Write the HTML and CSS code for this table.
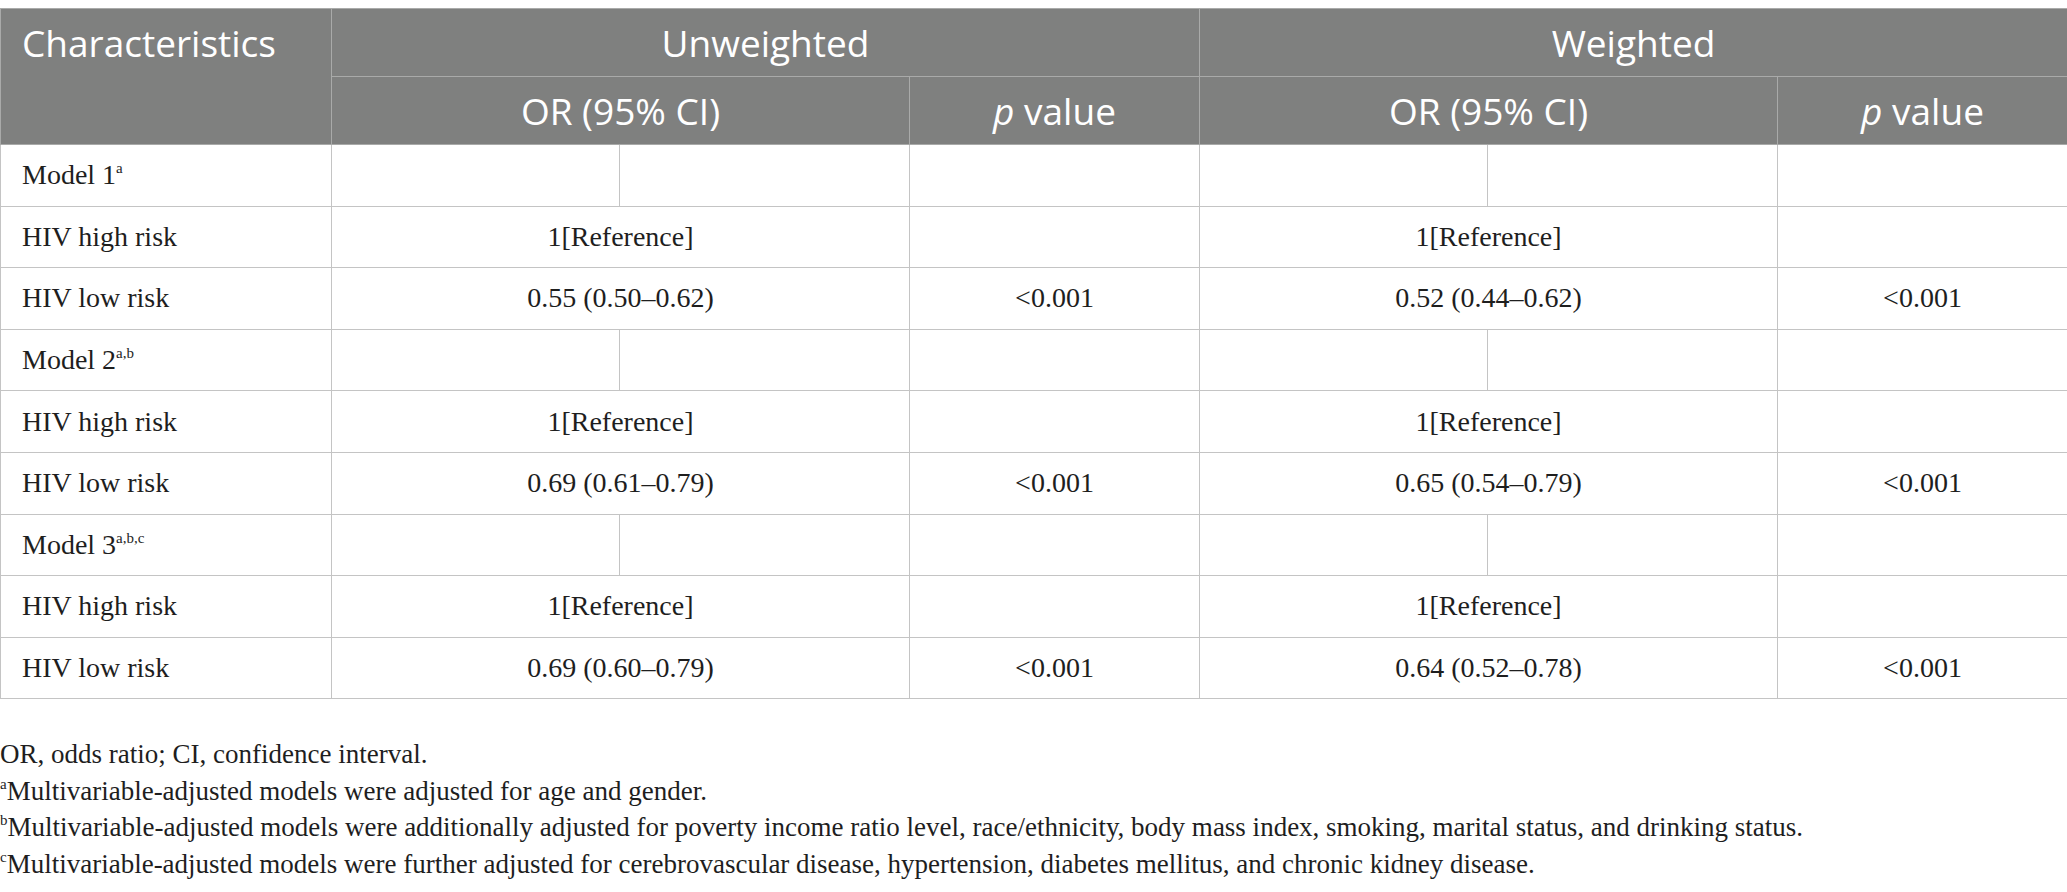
FILE: index.html
```html
<!DOCTYPE html>
<html>
<head>
<meta charset="utf-8">
<link rel="stylesheet" href="styles.css">
</head>
<body>
<table class="results">
  <colgroup>
    <col class="c-char">
    <col class="c-a">
    <col class="c-b">
    <col class="c-p">
    <col class="c-a">
    <col class="c-b">
    <col class="c-p">
  </colgroup>
  <thead>
    <tr class="h1">
      <th class="left" rowspan="2">Characteristics</th>
      <th colspan="3">Unweighted</th>
      <th colspan="3">Weighted</th>
    </tr>
    <tr class="h2">
      <th colspan="2">OR (95% CI)</th>
      <th><i>p</i> value</th>
      <th colspan="2">OR (95% CI)</th>
      <th><i>p</i> value</th>
    </tr>
  </thead>
  <tbody>
    <tr><td class="left">Model 1<sup>a</sup></td><td></td><td></td><td></td><td></td><td></td><td></td></tr>
    <tr><td class="left">HIV high risk</td><td colspan="2">1[Reference]</td><td></td><td colspan="2">1[Reference]</td><td></td></tr>
    <tr><td class="left">HIV low risk</td><td colspan="2">0.55 (0.50–0.62)</td><td>&lt;0.001</td><td colspan="2">0.52 (0.44–0.62)</td><td>&lt;0.001</td></tr>
    <tr><td class="left">Model 2<sup>a,b</sup></td><td></td><td></td><td></td><td></td><td></td><td></td></tr>
    <tr><td class="left">HIV high risk</td><td colspan="2">1[Reference]</td><td></td><td colspan="2">1[Reference]</td><td></td></tr>
    <tr><td class="left">HIV low risk</td><td colspan="2">0.69 (0.61–0.79)</td><td>&lt;0.001</td><td colspan="2">0.65 (0.54–0.79)</td><td>&lt;0.001</td></tr>
    <tr><td class="left">Model 3<sup>a,b,c</sup></td><td></td><td></td><td></td><td></td><td></td><td></td></tr>
    <tr><td class="left">HIV high risk</td><td colspan="2">1[Reference]</td><td></td><td colspan="2">1[Reference]</td><td></td></tr>
    <tr><td class="left">HIV low risk</td><td colspan="2">0.69 (0.60–0.79)</td><td>&lt;0.001</td><td colspan="2">0.64 (0.52–0.78)</td><td>&lt;0.001</td></tr>
  </tbody>
</table>
<div class="notes">
  <p>OR, odds ratio; CI, confidence interval.</p>
  <p><sup>a</sup>Multivariable-adjusted models were adjusted for age and gender.</p>
  <p><sup>b</sup>Multivariable-adjusted models were additionally adjusted for poverty income ratio level, race/ethnicity, body mass index, smoking, marital status, and drinking status.</p>
  <p><sup>c</sup>Multivariable-adjusted models were further adjusted for cerebrovascular disease, hypertension, diabetes mellitus, and chronic kidney disease.</p>
</div>
</body>
</html>
```

FILE: styles.css
```css
html, body {
  margin: 0;
  padding: 0;
  background: #ffffff;
}
body {
  padding-top: 8px;
  font-family: "Liberation Serif", "Times New Roman", serif;
  color: #1e1e1e;
}
.results {
  width: 2067px;
  border-collapse: collapse;
  table-layout: fixed;
}
.c-char { width: 331px; }
.c-a { width: 288px; }
.c-b { width: 290px; }
.c-p { width: 290px; }
.results th {
  background: #7f807f;
  color: #ffffff;
  font-family: "Open Sans", "Noto Sans", sans-serif;
  font-weight: 400;
  font-size: 37px;
  height: 67px;
  line-height: 44px;
  padding: 0;
  text-align: center;
  border: 1px solid #a9aaa9;
}
.results th.left {
  text-align: left;
  vertical-align: top;
  line-height: 67px;
  padding: 0 0 0 21px;
}
.results th i {
  font-style: italic;
}
.results td {
  height: 60.6px;
  padding: 0;
  text-align: center;
  font-size: 28px;
  color: #1e1e1e;
  border: 1px solid #c4c4c4;
}
.results td.left {
  text-align: left;
  padding-left: 21px;
}
sup {
  font-size: 15px;
  vertical-align: 11px;
  line-height: 0;
}
.notes {
  margin-top: 37px;
  font-size: 27px;
  color: #1e1e1e;
}
.notes p {
  margin: 0;
  line-height: 36.5px;
}
```
